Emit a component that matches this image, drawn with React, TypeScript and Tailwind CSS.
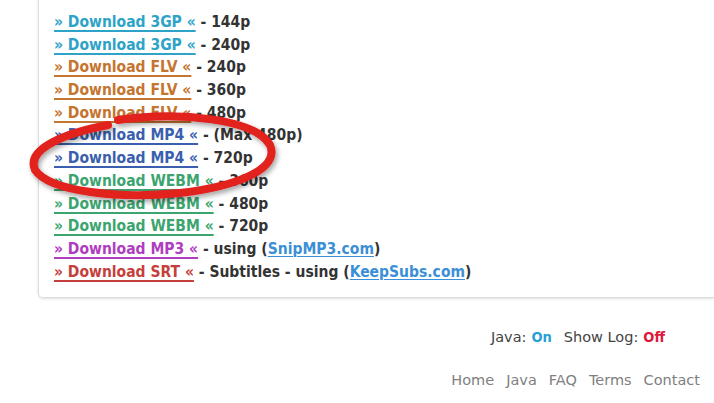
import React from "react";

type Row = { label: string; color: string; rest: React.ReactNode };

const rows: Row[] = [
  { label: "» Download 3GP «", color: "text-[#2ea3c8] decoration-[#2ea3c8]", rest: " - 144p" },
  { label: "» Download 3GP «", color: "text-[#2ea3c8] decoration-[#2ea3c8]", rest: " - 240p" },
  { label: "» Download FLV «", color: "text-[#c4752f] decoration-[#c4752f]", rest: " - 240p" },
  { label: "» Download FLV «", color: "text-[#c4752f] decoration-[#c4752f]", rest: " - 360p" },
  { label: "» Download FLV «", color: "text-[#c4752f] decoration-[#c4752f]", rest: " - 480p" },
  { label: "» Download MP4 «", color: "text-[#3a5fae] decoration-[#3a5fae]", rest: " - (Max 480p)" },
  { label: "» Download MP4 «", color: "text-[#3a5fae] decoration-[#3a5fae]", rest: " - 720p" },
  { label: "» Download WEBM «", color: "text-[#3ca56f] decoration-[#3ca56f]", rest: " - 360p" },
  { label: "» Download WEBM «", color: "text-[#3ca56f] decoration-[#3ca56f]", rest: " - 480p" },
  { label: "» Download WEBM «", color: "text-[#3ca56f] decoration-[#3ca56f]", rest: " - 720p" },
  {
    label: "» Download MP3 «",
    color: "text-[#b03cbf] decoration-[#b03cbf]",
    rest: (
      <>
        {" - using ("}
        <a className="text-[#3b8fd6] underline decoration-1 underline-offset-2">SnipMP3.com</a>
        {")"}
      </>
    ),
  },
  {
    label: "» Download SRT «",
    color: "text-[#c53f3d] decoration-[#c53f3d]",
    rest: (
      <>
        {" - Subtitles - using ("}
        <a className="text-[#3b8fd6] underline decoration-1 underline-offset-2">KeepSubs.com</a>
        {")"}
      </>
    ),
  },
];

export default function App() {
  return (
    <div className="relative w-[714px] h-[403px] overflow-hidden bg-white font-['DejaVu_Sans_Condensed','DejaVu_Sans',sans-serif]">
      <div className="ml-[38px] -mt-[20px] h-[318px] rounded-bl-[5px] border-l border-b border-[#dcdcdc] shadow-[0_1px_3px_rgba(0,0,0,0.12)] pl-[15px] pt-[31px]">
        <div className="flex flex-col">
          {rows.map((r, i) => (
            <div key={i} className="h-[22.7px] leading-[22.7px] text-[15.5px] font-bold text-[#333] whitespace-nowrap">
              <a className={`${r.color} underline decoration-[1.5px] underline-offset-[3px]`}>{r.label}</a>
              {r.rest}
            </div>
          ))}
        </div>
      </div>

      <div className="mt-[30px] flex justify-end pr-[49px] text-[14.5px] font-['DejaVu_Sans',sans-serif] text-[#444] leading-[18px]">
        <span>Java: </span>
        <span className="ml-[5px] font-bold text-[#2a9fd6] font-['DejaVu_Sans_Condensed',sans-serif]">On</span>
        <span className="ml-[12px]">Show Log: </span>
        <span className="ml-[5px] font-bold text-[#e0173c] font-['DejaVu_Sans_Condensed',sans-serif]">Off</span>
      </div>

      <div className="mt-[25px] flex justify-end gap-[12px] pr-[14px] text-[14.5px] font-['DejaVu_Sans',sans-serif] text-[#808080] leading-[18px]">
        <span>Home</span>
        <span>Java</span>
        <span>FAQ</span>
        <span>Terms</span>
        <span>Contact</span>
      </div>

      <svg className="absolute left-0 top-0 pointer-events-none" width="714" height="403">
        <defs>
          <filter id="sh" x="-20%" y="-40%" width="140%" height="180%">
            <feDropShadow dx="2" dy="3" stdDeviation="2.5" floodColor="#000" floodOpacity="0.35" />
          </filter>
        </defs>
        <path
          d="M118 120 C 180 111, 255 119, 270 145 C 280 168, 240 186, 180 193 C 120 199, 50 192, 35 170 C 27 152, 55 135, 108 125"
          fill="none"
          stroke="#e2201f"
          strokeWidth="8"
          strokeLinecap="round"
          filter="url(#sh)"
        />
      </svg>
    </div>
  );
}
